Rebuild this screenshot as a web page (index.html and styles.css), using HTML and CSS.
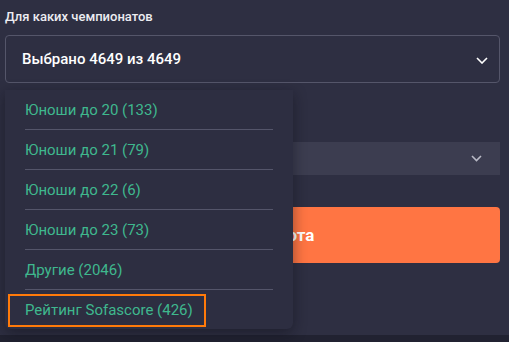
FILE: index.html
```html
<!DOCTYPE html>
<html lang="ru">
<head>
<meta charset="utf-8">
<link rel="stylesheet" href="styles.css">
</head>
<body>
<div class="page">
  <div class="label">Для каких чемпионатов</div>
  <div class="select">
    <span>Выбрано 4649 из 4649</span>
    <svg class="chev" width="12" height="7" viewBox="0 0 12 7"><path d="M1 1l5 5 5-5" fill="none" stroke="#fff" stroke-width="1.6"/></svg>
  </div>
  <div class="select2">
    <svg class="chev2" width="11" height="7" viewBox="0 0 11 7"><path d="M1 1l4.5 4.5L10 1" fill="none" stroke="#b9bac6" stroke-width="1.6"/></svg>
  </div>
  <div class="btn">Запустить бота</div>

  <ul class="menu">
    <li>Юноши до 20 (133)</li>
    <li>Юноши до 21 (79)</li>
    <li>Юноши до 22 (6)</li>
    <li>Юноши до 23 (73)</li>
    <li>Другие (2046)</li>
    <li class="focus"><span>Рейтинг Sofascore (426)</span></li>
  </ul>
</div>
</body>
</html>
```
FILE: styles.css
```css
html, body { margin: 0; padding: 0; }
body {
  background: #212231;
  font-family: Roboto, "Liberation Sans", sans-serif;
  width: 509px;
  height: 342px;
  overflow: hidden;
}
.page {
  position: relative;
  height: 335px;
  background: #2e2f42;
  padding: 0 9px 0 5px;
  box-sizing: border-box;
  display: flex;
  flex-direction: column;
}
.label {
  color: #ececf1;
  font-size: 13px;
  font-weight: 500;
  line-height: 16px;
  margin-top: 9px;
  height: 16px;
}
.select {
  margin-top: 10px;
  height: 48px;
  box-sizing: border-box;
  border: 1px solid #55566a;
  border-radius: 4px;
  display: flex;
  align-items: center;
  justify-content: space-between;
  padding: 0 11px 0 16px;
  color: #fff;
  font-size: 15px;
  font-weight: 500;
}
.chev { display: block; margin-top: 2px; }
.select2 {
  margin-top: 59px;
  height: 33px;
  background: #3c3d50;
  display: flex;
  align-items: center;
  justify-content: flex-end;
  padding: 0 18px 0 16px;
}
.chev2 { display: block; }
.btn {
  margin-top: 32px;
  height: 56px;
  background: #ff7543;
  border-radius: 4px;
  color: #fff;
  font-weight: 700;
  font-size: 17px;
  display: flex;
  align-items: center;
  justify-content: center;
}
.menu {
  position: absolute;
  left: 5px;
  top: 90px;
  width: 288px;
  margin: 0;
  padding: 0;
  list-style: none;
  background: #2d2e41;
  border-radius: 0 0 6px 6px;
  box-shadow: 0 4px 14px rgba(10, 10, 20, 0.45);
}
.menu li {
  height: 40px;
  margin: 0 20px;
  border-bottom: 1px solid #54556a;
  box-sizing: border-box;
  display: flex;
  align-items: center;
  color: #3fb88e;
  font-size: 15px;
}
.menu li.focus {
  border-bottom: none;
  margin: 0;
  padding: 4px 0 3px 3px;
  height: 39px;
}
.menu li.focus span {
  display: flex;
  align-items: center;
  height: 33px;
  width: 198px;
  box-sizing: border-box;
  border: 2px solid #ff7a0a;
  padding-left: 15px;
}
```
